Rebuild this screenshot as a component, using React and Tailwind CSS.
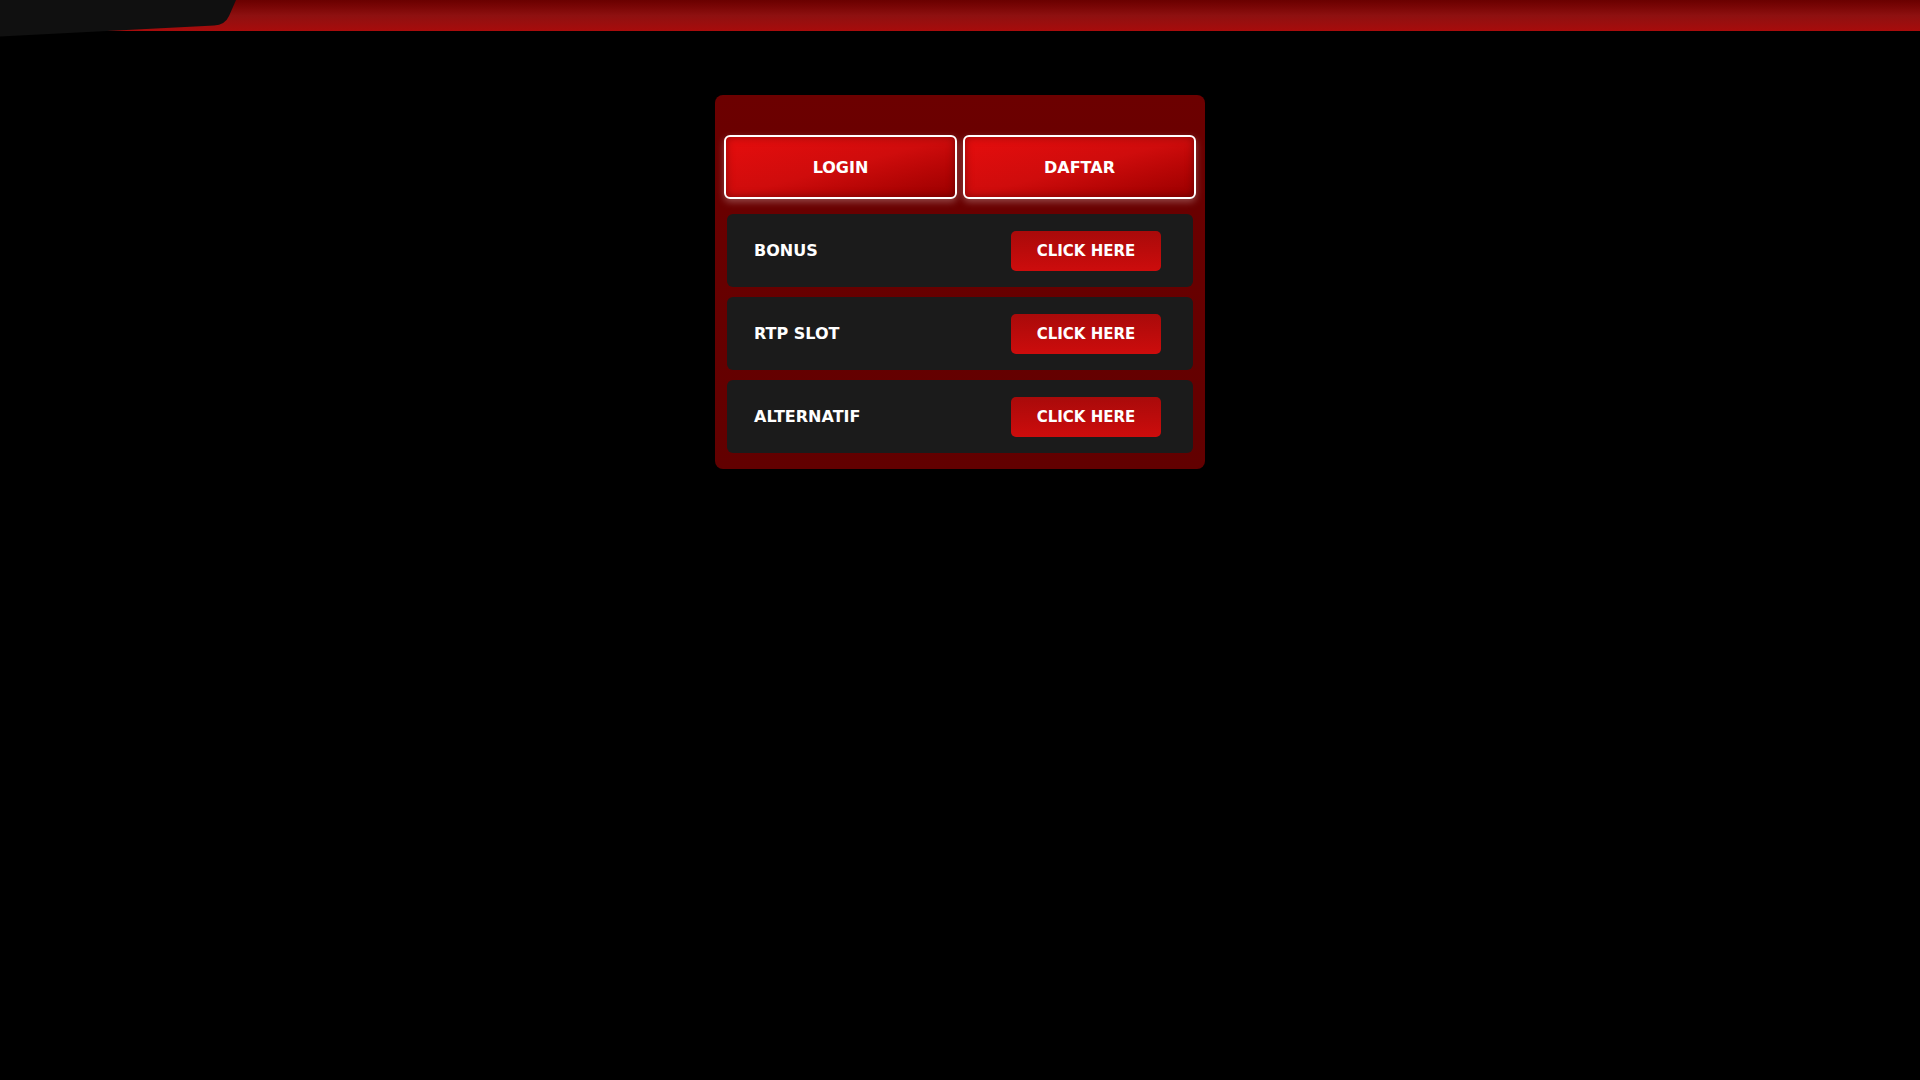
import React from 'react';

const links = [
  { label: 'BONUS' },
  { label: 'RTP SLOT' },
  { label: 'ALTERNATIF' },
];

const TopBar = () => (
  <div className="relative h-[31px] bg-gradient-to-b from-[#6a0000] via-[#8e1010] to-[#a80b0b]">
    <svg
      className="absolute left-0 top-0"
      width="240"
      height="37"
      viewBox="0 0 240 37"
    >
      <path d="M0 0 H236 L229 16 Q225 25 214 25.6 L0 36.5 Z" fill="#101010" />
    </svg>
  </div>
);

const AuthButton = ({ children }) => (
  <button className="h-[64px] rounded-[6px] border-2 border-white bg-gradient-to-br from-[#e60d0d] via-[#cf0c0c] to-[#9a0000] pt-[2px] text-[16px] font-bold text-white shadow-[inset_0_0_9px_rgba(0,0,0,0.35),0_3px_7px_rgba(255,255,255,0.28)]">
    {children}
  </button>
);

const LinkRow = ({ label }) => (
  <div className="flex h-[73px] items-center justify-between rounded-[6px] bg-[#1b1b1b] pl-[27px] pr-[32px]">
    <span className="text-[16px] font-bold text-white">{label}</span>
    <button className="flex h-[40px] w-[150px] items-center justify-center rounded-[5px] bg-gradient-to-b from-[#a90a0a] to-[#cd0c0c] pt-[2px] text-[15px] font-bold text-white">
      CLICK HERE
    </button>
  </div>
);

export default function App() {
  return (
    <div
      className="min-h-screen bg-black"
      style={{ fontFamily: '"DejaVu Sans", Verdana, sans-serif' }}
    >
      <TopBar />
      <div className="mx-auto mt-[64px] w-[490px] rounded-[8px] bg-gradient-to-b from-[#6c0000] to-[#620000] px-[9px] pb-[16px] pt-[40px]">
        <div className="grid grid-cols-2 gap-[6px]">
          <AuthButton>LOGIN</AuthButton>
          <AuthButton>DAFTAR</AuthButton>
        </div>
        <div className="mt-[15px] flex flex-col gap-[10px] px-[3px]">
          {links.map((l) => (
            <LinkRow key={l.label} label={l.label} />
          ))}
        </div>
      </div>
    </div>
  );
}
